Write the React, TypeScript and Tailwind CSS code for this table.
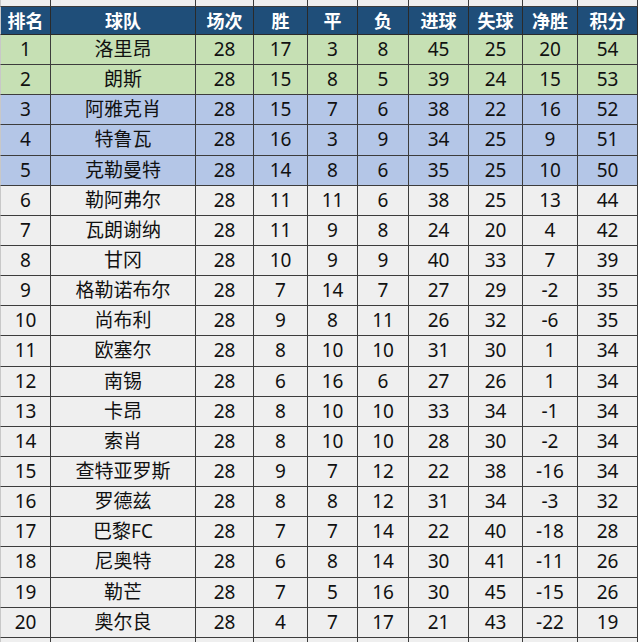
const HEAD = ["排名", "球队", "场次", "胜", "平", "负", "进球", "失球", "净胜", "积分"];

const ROWS: (string | number)[][] = [
  [1, "洛里昂", 28, 17, 3, 8, 45, 25, 20, 54],
  [2, "朗斯", 28, 15, 8, 5, 39, 24, 15, 53],
  [3, "阿雅克肖", 28, 15, 7, 6, 38, 22, 16, 52],
  [4, "特鲁瓦", 28, 16, 3, 9, 34, 25, 9, 51],
  [5, "克勒曼特", 28, 14, 8, 6, 35, 25, 10, 50],
  [6, "勒阿弗尔", 28, 11, 11, 6, 38, 25, 13, 44],
  [7, "瓦朗谢纳", 28, 11, 9, 8, 24, 20, 4, 42],
  [8, "甘冈", 28, 10, 9, 9, 40, 33, 7, 39],
  [9, "格勒诺布尔", 28, 7, 14, 7, 27, 29, -2, 35],
  [10, "尚布利", 28, 9, 8, 11, 26, 32, -6, 35],
  [11, "欧塞尔", 28, 8, 10, 10, 31, 30, 1, 34],
  [12, "南锡", 28, 6, 16, 6, 27, 26, 1, 34],
  [13, "卡昂", 28, 8, 10, 10, 33, 34, -1, 34],
  [14, "索肖", 28, 8, 10, 10, 28, 30, -2, 34],
  [15, "查特亚罗斯", 28, 9, 7, 12, 22, 38, -16, 34],
  [16, "罗德兹", 28, 8, 8, 12, 31, 34, -3, 32],
  [17, "巴黎FC", 28, 7, 7, 14, 22, 40, -18, 28],
  [18, "尼奥特", 28, 6, 8, 14, 30, 41, -11, 26],
  [19, "勒芒", 28, 7, 5, 16, 30, 45, -15, 26],
  [20, "奥尔良", 28, 4, 7, 17, 21, 43, -22, 19],
];

const COLS = "grid-cols-[51px_145px_58px_54px_50px_51px_60px_54px_55px_60px]";

function rowBg(i: number) {
  if (i < 2) return "bg-[#c6e0b4]";
  if (i < 5) return "bg-[#b4c6e7]";
  return "bg-[#efefef]";
}

export default function App() {
  return (
    <div
      className="w-[640px] h-[642px] overflow-hidden bg-white text-[#111]"
      style={{ fontFamily: '"Noto Sans", "Noto Sans CJK SC", sans-serif' }}
    >
      <div className="w-[638px]">
        {/* sliver of the row above */}
        <div className={`grid ${COLS} h-[7px]`}>
          {HEAD.map((_, j) => (
            <div
              key={j}
              className={`bg-[#efefef] border-r border-b border-[#3c3c3c] ${j === 0 ? "border-l border-l-[#c8c8c8]" : ""}`}
            />
          ))}
        </div>

        {/* header */}
        <div className={`grid ${COLS} h-[28px]`}>
          {HEAD.map((h, j) => (
            <div
              key={h}
              className={`bg-[#1f4e79] text-white font-bold text-[18px] leading-none flex items-center justify-center border-r border-b border-[#2a2a2a] ${j === 0 ? "border-l border-l-[#c8c8c8]" : ""}`}
            >
              {h}
            </div>
          ))}
        </div>

        {ROWS.map((r, i) => (
          <div key={i} className={`grid ${COLS} h-[30.15px]`}>
            {r.map((v, j) => (
              <div
                key={j}
                className={`${rowBg(i)} text-[19px] leading-none flex items-center justify-center border-r border-b border-[#3c3c3c] ${j === 0 ? "border-l border-l-[#c8c8c8]" : ""}`}
              >
                {v}
              </div>
            ))}
          </div>
        ))}

        {/* sliver of the row below */}
        <div className={`grid ${COLS} h-[10px]`}>
          {HEAD.map((_, j) => (
            <div
              key={j}
              className={`bg-[#efefef] border-r border-[#3c3c3c] ${j === 0 ? "border-l border-l-[#c8c8c8]" : ""}`}
            />
          ))}
        </div>
      </div>
    </div>
  );
}
